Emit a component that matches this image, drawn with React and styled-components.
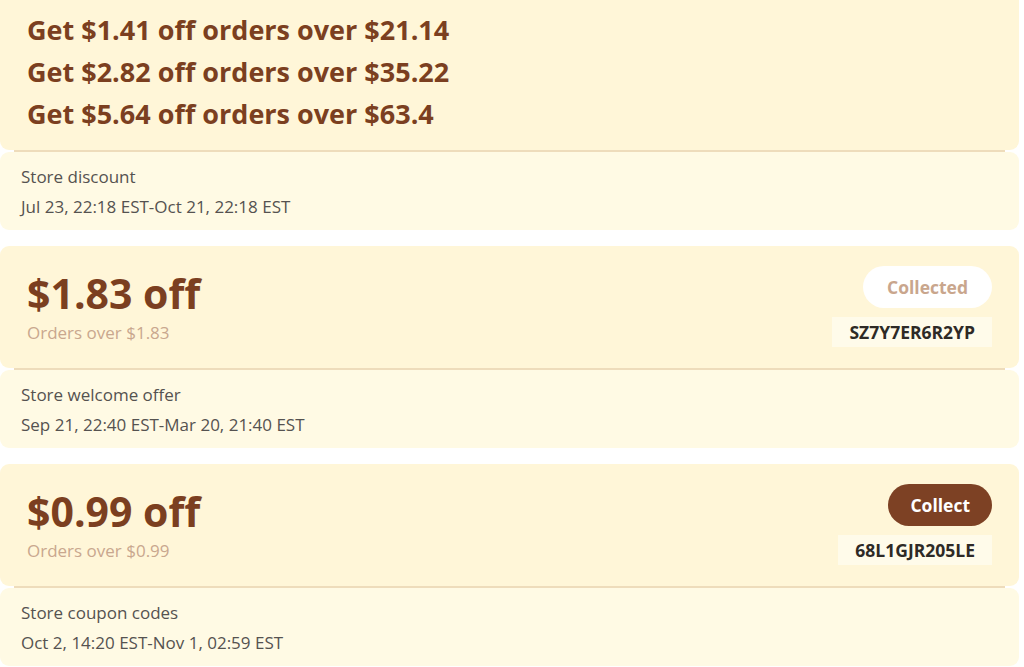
import React from 'react';
import styled, { createGlobalStyle } from 'styled-components';

const GlobalStyle = createGlobalStyle`
  html, body {
    margin: 0;
    padding: 0;
    background: #ffffff;
    font-family: "Open Sans", "Noto Sans", "Liberation Sans", sans-serif;
    overflow: hidden;
  }
`;

const Page = styled.div`
  width: 1019px;
  margin-top: -12px;
  display: flex;
  flex-direction: column;
  gap: 16px;
`;

const Card = styled.div`
  display: flex;
  flex-direction: column;
`;

const Upper = styled.div`
  background: #fff6d8;
  border-radius: 9px;
  padding: ${props => props.compact ? '21px 27px 15px' : '19px 27px 21px'};
  display: flex;
  justify-content: space-between;
  align-items: flex-start;
`;

const Divider = styled.div`
  height: 2px;
  margin: 0 14px;
  background: #eedcbb;
`;

const Lower = styled.div`
  background: #fffae4;
  border-radius: 9px;
  padding: 15px 21px 13px;
  display: flex;
  flex-direction: column;
  gap: 10px;
`;

const TierList = styled.div`
  display: flex;
  flex-direction: column;
`;

const Tier = styled.div`
  font-size: 27px;
  line-height: 42px;
  font-weight: 700;
  color: #7b3f20;
`;

const OfferInfo = styled.div`
  display: flex;
  flex-direction: column;
`;

const Price = styled.div`
  font-size: 41px;
  line-height: 56px;
  font-weight: 700;
  color: #7b3f20;
`;

const Threshold = styled.div`
  font-size: 17px;
  line-height: 23px;
  color: #c9a78e;
`;

const Actions = styled.div`
  margin-top: 1px;
  display: flex;
  flex-direction: column;
  align-items: flex-end;
  gap: 9px;
`;

const CollectButton = styled.button`
  height: 42px;
  padding: 0 ${props => props.collected ? '24px' : '22px'};
  border: none;
  border-radius: 21px;
  font-family: inherit;
  font-size: 17.5px;
  font-weight: 700;
  cursor: pointer;
  background: ${props => props.collected ? '#ffffff' : '#7d4124'};
  color: ${props => props.collected ? '#c9a68d' : '#ffffff'};
`;

const Code = styled.div`
  height: 30px;
  padding: 0 17px;
  display: flex;
  align-items: center;
  background: #fffbea;
  font-size: 17.5px;
  font-weight: 700;
  color: #2e2a26;
`;

const Meta = styled.div`
  font-size: 17px;
  line-height: 20px;
  color: #555250;
`;

const offers = [
  {
    price: '$1.83 off',
    threshold: 'Orders over $1.83',
    collected: true,
    code: 'SZ7Y7ER6R2YP',
    type: 'Store welcome offer',
    period: 'Sep 21, 22:40 EST-Mar 20, 21:40 EST',
  },
  {
    price: '$0.99 off',
    threshold: 'Orders over $0.99',
    collected: false,
    code: '68L1GJR205LE',
    type: 'Store coupon codes',
    period: 'Oct 2, 14:20 EST-Nov 1, 02:59 EST',
  },
];

const tiers = [
  'Get $1.41 off orders over $21.14',
  'Get $2.82 off orders over $35.22',
  'Get $5.64 off orders over $63.4',
];

export default function App() {
  return (
    <>
      <GlobalStyle />
      <Page>
        <Card>
          <Upper compact>
            <TierList>
              {tiers.map(t => <Tier key={t}>{t}</Tier>)}
            </TierList>
          </Upper>
          <Divider />
          <Lower>
            <Meta>Store discount</Meta>
            <Meta>Jul 23, 22:18 EST-Oct 21, 22:18 EST</Meta>
          </Lower>
        </Card>

        {offers.map(o => (
          <Card key={o.code}>
            <Upper>
              <OfferInfo>
                <Price>{o.price}</Price>
                <Threshold>{o.threshold}</Threshold>
              </OfferInfo>
              <Actions>
                <CollectButton collected={o.collected}>
                  {o.collected ? 'Collected' : 'Collect'}
                </CollectButton>
                <Code>{o.code}</Code>
              </Actions>
            </Upper>
            <Divider />
            <Lower>
              <Meta>{o.type}</Meta>
              <Meta>{o.period}</Meta>
            </Lower>
          </Card>
        ))}
      </Page>
    </>
  );
}
